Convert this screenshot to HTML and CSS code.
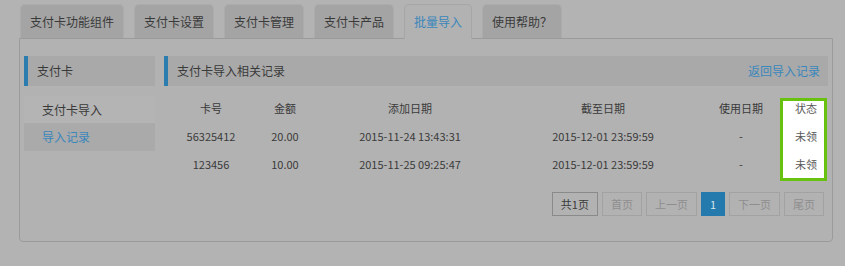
FILE: index.html
```html
<!DOCTYPE html>
<html lang="zh-CN">

<head>
    <meta charset="UTF-8">
    <meta name="viewport" content="width=device-width, initial-scale=1.0">
    <title>批量导入</title>
    <link rel="stylesheet" href="styles.css">
</head>

<body>
    <div class="page">
        <ul class="tabs">
            <li>支付卡功能组件</li>
            <li>支付卡设置</li>
            <li>支付卡管理</li>
            <li>支付卡产品</li>
            <li class="active">批量导入</li>
            <li>使用帮助？</li>
        </ul>

        <div class="panel">
            <div class="sidebar">
                <div class="box-title">支付卡</div>
                <ul class="menu">
                    <li>支付卡导入</li>
                    <li class="current">导入记录</li>
                </ul>
            </div>

            <div class="main">
                <div class="box-title">
                    <span>支付卡导入相关记录</span>
                    <a href="#" class="back-link">返回导入记录</a>
                </div>

                <div class="table-wrap">
                    <!-- highlight box around the status column -->
                    <div class="highlight"></div>
                    <table class="records">
                        <colgroup>
                            <col style="width: 94px">
                            <col style="width: 54px">
                            <col style="width: 196px">
                            <col style="width: 190px">
                            <col style="width: 86px">
                            <col style="width: 44px">
                        </colgroup>
                        <thead>
                            <tr>
                                <th>卡号</th>
                                <th>金额</th>
                                <th>添加日期</th>
                                <th>截至日期</th>
                                <th>使用日期</th>
                                <th class="status">状态</th>
                            </tr>
                        </thead>
                        <tbody>
                            <tr>
                                <td>56325412</td>
                                <td>20.00</td>
                                <td>2015-11-24 13:43:31</td>
                                <td>2015-12-01 23:59:59</td>
                                <td>-</td>
                                <td class="status">未领</td>
                            </tr>
                            <tr>
                                <td>123456</td>
                                <td>10.00</td>
                                <td>2015-11-25 09:25:47</td>
                                <td>2015-12-01 23:59:59</td>
                                <td>-</td>
                                <td class="status">未领</td>
                            </tr>
                        </tbody>
                    </table>
                </div>

                <div class="pager">
                    <span class="total">共1页</span>
                    <span class="off">首页</span>
                    <span class="off">上一页</span>
                    <span class="now">1</span>
                    <span class="off">下一页</span>
                    <span class="off">尾页</span>
                </div>
            </div>
        </div>
    </div>
</body>

</html>
```

FILE: styles.css
```css
body {
    margin: 0;
    background-color: #b3b3b3;
    font-family: "Noto Sans CJK SC", "Microsoft YaHei", sans-serif;
    font-size: 12px;
    color: #3a3a3a;
}

.page {
    padding: 4px 12px 0 19px;
}

/* tabs */
.tabs {
    list-style-type: none;
    margin: 0 0 0 1px;
    padding: 0;
    display: flex;
    gap: 10px;
}

.tabs li {
    height: 33px;
    line-height: 33px;
    padding: 0 9px;
    background-color: #a4a4a4;
    border: 1px solid #acacac;
    border-bottom: none;
    border-radius: 5px 5px 0 0;
}

.tabs li.active {
    background-color: #b2b2b2;
    color: #3a87bc;
    border-color: #a6a6a6;
    position: relative;
    z-index: 1;
    height: 34px;
    margin-bottom: -1px;
}

/* panel */
.panel {
    border: 1px solid #9b9b9b;
    border-radius: 0 0 4px 4px;
    background-color: #b2b2b2;
    padding: 17px 4px 25px 4px;
    display: flex;
    gap: 9px;
}

.box-title {
    height: 30px;
    line-height: 30px;
    background-color: #a9a9a9;
    border-left: 4px solid #2b7caf;
    padding: 0 8px 0 9px;
    display: flex;
    justify-content: space-between;
}

.sidebar {
    width: 131px;
}

.menu {
    list-style-type: none;
    margin: 10px 0 0 0;
    padding: 0;
}

.menu li {
    height: 27px;
    line-height: 27px;
    padding-left: 18px;
    background-color: #b4b4b4;
}

.menu li.current {
    height: 28px;
    background-color: #aaaaaa;
    color: #3a87bc;
}

.main {
    flex: 1;
}

.back-link {
    color: #3a87bc;
    text-decoration: none;
}

/* records table */
.table-wrap {
    position: relative;
    padding-top: 8px;
}

.highlight {
    position: absolute;
    top: 12px;
    left: 616px;
    width: 41px;
    height: 77px;
    background-color: #ffffff;
    border: 3px solid #67c20f;
}

.records {
    position: relative;
    width: 664px;
    border-collapse: collapse;
    table-layout: fixed;
    font-size: 11px;
}

.records th,
.records td {
    height: 28px;
    padding: 0;
    text-align: center;
    font-weight: normal;
}

.records .status {
    color: #5a5a5a;
}

/* pagination */
.pager {
    margin-top: 14px;
    padding-right: 4px;
    display: flex;
    justify-content: flex-end;
    gap: 4px;
    font-size: 11px;
}

.pager span {
    height: 22px;
    line-height: 22px;
    padding: 0 8px;
    border: 1px solid #a2a2a2;
    color: #8e8e8e;
}

.pager .total {
    border-color: #8a8a8a;
    color: #3a3a3a;
}

.pager .now {
    background-color: #2479ad;
    border-color: #2479ad;
    color: #d6e3ec;
}
```
